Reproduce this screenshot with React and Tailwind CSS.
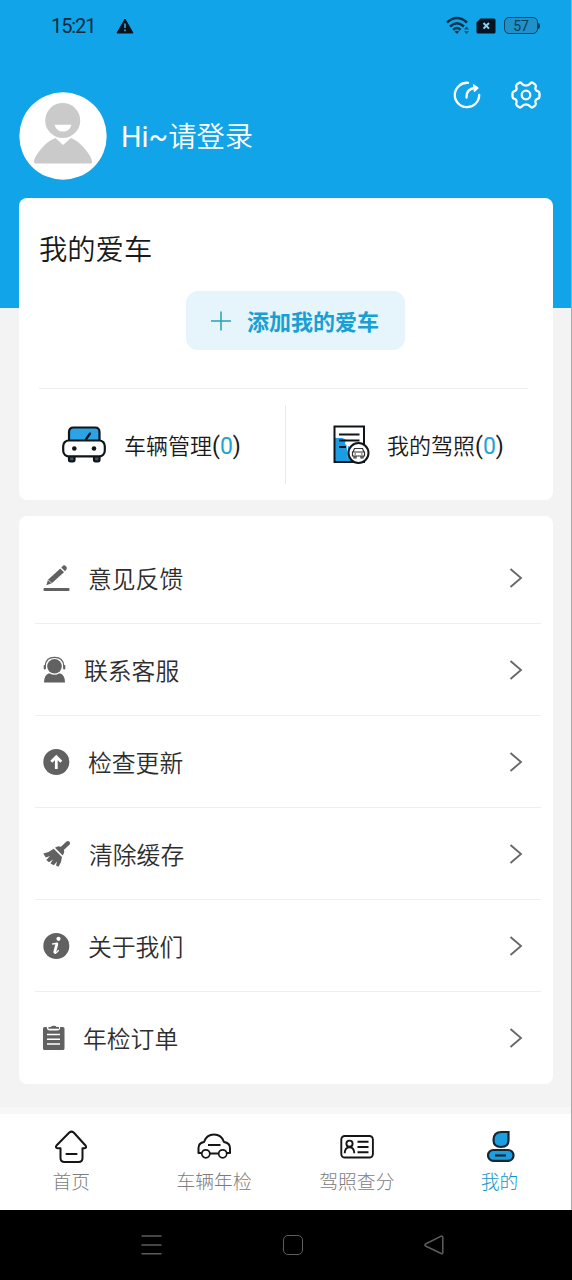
import React from 'react';

const StatusBar = () => (
  <div className="flex h-[52px] items-center pl-[51px] pr-[31px] text-[#082b42]">
    <span className="w-[65px] font-['Roboto'] text-[20px] font-normal leading-none tracking-[-1.1px]">15:21</span>
    <svg className="h-[16px] w-[18px]" viewBox="0 0 18 16">
      <path d="M9 1 L17 15 H1 Z" fill="#06141f" stroke="#06141f" strokeWidth="1" strokeLinejoin="round" />
      <path d="M9 5.5 V10 M9 11.5 V13.2" stroke="#4aa8d8" strokeWidth="1.6" />
    </svg>
    <svg className="ml-auto h-[20px] w-[24px]" viewBox="0 0 24 20" fill="none" stroke="#073049" strokeWidth="2.4">
      <path d="M1 6.500 Q11 -2.500 21 6.500" />
      <path d="M4 10.5 Q11 4 18 10.5" />
      <path d="M7.2 13.8 Q11 10.4 14.5 13.8" />
      <path d="M8.6 15.6 L11 18 L13.2 15.6 Q11 14 8.6 15.6Z" fill="#073049" stroke="none" />
      <path d="M18 13.5 L20.5 10.5 L23 13.5Z M18 15 L20.5 18 L23 15Z" fill="#0a5078" stroke="none" />
    </svg>
    <svg className="ml-[6px] -mt-px h-[16px] w-[20px]" viewBox="0 0 20 16">
      <path d="M4.5 0.5 H18 Q19.5 0.5 19.5 2 V14 Q19.5 15.5 18 15.5 H2 Q0.5 15.5 0.5 14 V4.5 Z" fill="#06141f" />
      <path d="M7.5 5 L13 10.6 M13 5 L7.5 10.6" stroke="#8fd0f0" strokeWidth="2" />
    </svg>
    <div className="ml-[8px] -mt-px flex h-[17px] w-[34px] items-center justify-center rounded-[5px] border-[1.5px] border-[#0a4569] bg-[#2092cb] font-['Roboto'] text-[14px] font-normal leading-none text-[#0a3d5c]">
      57
    </div>
    <div className="-mt-px h-[6px] w-[2px] rounded-r-sm bg-[#0a4569]" />
  </div>
);

const Avatar = () => (
  <svg className="h-[88px] w-[88px]" viewBox="0 0 88 88">
    <circle cx="44" cy="44" r="43.7" fill="#fff" />
    <path d="M15 70.5 Q14.5 66 22 57 Q29 48.500 36.500 46 L44 53 L52 46 Q59 48.500 66 57 Q73.500 66 73 70.500 Q72.500 71.500 71 71.500 H17 Q15.500 71.500 15 70.500Z" fill="#cacaca" />
    <circle cx="44" cy="28.500" r="19" fill="#fff" />
    <circle cx="43.700" cy="28.500" r="17.500" fill="#cacaca" />
    <path d="M35.500 32.700 H52.500 Q50.500 39.500 44 39.500 Q37.500 39.500 35.500 32.700Z" fill="#fff" />
  </svg>
);

const ShareIcon = () => (
  <svg className="h-[28px] w-[28px]" viewBox="0 0 28 28" fill="none" stroke="#fff" strokeWidth="2.300" strokeLinecap="round" strokeLinejoin="round">
    <path d="M15 1.800 A12.200 12.200 0 1 0 26.200 14" />
    <path d="M13.500 16.500 Q13 8 22 7" />
    <path d="M20.500 3.800 L25 7 L21.500 10.200Z" fill="#fff" strokeWidth="1.300" />
  </svg>
);

const GearIcon = () => (
  <svg className="h-[30px] w-[30px]" viewBox="0 0 30 30" fill="none" stroke="#fff" strokeWidth="2.300" strokeLinejoin="round">
    <path d="M8 2.900 Q9.300 2 10.500 3.200 Q12.300 5.600 15 5.600 Q17.700 5.600 19.500 3.200 Q20.700 2 22 2.900 L24.300 4.700 Q25.300 5.700 24.600 7.200 Q23.700 10.400 26.600 11.200 Q28.500 11.700 28.500 13.300 V16.700 Q28.500 18.300 26.600 18.800 Q23.700 19.600 24.600 22.800 Q25.300 24.300 24.300 25.300 L22 27.100 Q20.700 28 19.500 26.800 Q17.700 24.400 15 24.400 Q12.300 24.400 10.500 26.800 Q9.300 28 8 27.100 L5.700 25.300 Q4.700 24.300 5.400 22.800 Q6.300 19.600 3.400 18.800 Q1.500 18.300 1.500 16.700 V13.300 Q1.500 11.700 3.400 11.200 Q6.300 10.400 5.400 7.200 Q4.700 5.700 5.700 4.700Z" />
    <circle cx="15" cy="15" r="4.300" />
  </svg>
);

const CarIcon = () => (
  <svg className="h-[37px] w-[44px]" viewBox="0 0 44 37" stroke="#10151a" strokeWidth="2.200">
    <rect x="7" y="29.500" width="5.500" height="5.800" rx="1.500" fill="#456" />
    <rect x="32" y="29.500" width="5.500" height="5.800" rx="1.500" fill="#456" />
    <path d="M7 16 V6 Q7 1.500 11.500 1.500 H33 Q37.500 1.500 37.500 6 V16Z" fill="#2ba3e4" />
    <path d="M23.500 14 L28 7.500" strokeLinecap="round" />
    <rect x="1.200" y="14.500" width="41.600" height="15.800" rx="5.500" fill="#fff" />
    <circle cx="12.300" cy="22.500" r="2.300" fill="#10151a" stroke="none" />
    <circle cx="32" cy="22.500" r="2.300" fill="#10151a" stroke="none" />
  </svg>
);

const LicenseIcon = () => (
  <svg className="h-[39px] w-[37px]" viewBox="0 0 37 39" fill="none" stroke="#10151a" strokeWidth="2">
    <path d="M2 13 H9 L13 14.500 L15 37 H2Z" fill="#1c9ce2" stroke="none" />
    <path d="M14 37 H30.500 V20 L15 20Z" fill="#1c9ce2" stroke="none" />
    <path d="M13 12 H30 V22 H17 L12 19Z" fill="#fff" stroke="none" />
    <rect x="1.500" y="1.500" width="29.500" height="35.500" />
    <path d="M6 9.500 H26.500 M6 15.500 H26.500 M6 22 H13" />
    <circle cx="25.500" cy="28" r="10" fill="#fff" />
    <path d="M20 27 L21.500 23.500 H29.500 L31 27 M19.500 27 H31.500 V31 H19.500Z M21 31 V33 H23 V31 M28 31 V33 H30 V31 M21.500 29 H23 M28 29 H29.500" stroke="#333" strokeWidth="1.200" />
  </svg>
);

const PencilIcon = () => (
  <svg className="h-[28px] w-[27px]" viewBox="0 0 27 28" fill="#616161">
    <rect x="0.500" y="24" width="26" height="3" rx="1" />
    <path d="M3.300 21.300 L5 15.800 L17.300 4.500 L21 8.200 L8.800 19.300Z" />
    <path d="M18.300 3.500 L20.200 1.500 Q21.500 0.600 23 2.200 Q24.500 3.800 23.600 5.200 L22 7.200Z" />
    <path d="M4.500 15.500 L9 19.500" stroke="#fff" strokeWidth="0.700" />
  </svg>
);

const ServiceIcon = () => (
  <svg className="h-[28px] w-[23px]" viewBox="0 0 23 28" fill="#616161">
    <path d="M2.200 10 Q2.700 1.300 11.500 1.300 Q20.300 1.300 20.800 10" fill="none" stroke="#616161" strokeWidth="1.200" />
    <rect x="0.700" y="9" width="2.200" height="4.500" rx="1" />
    <rect x="20.100" y="9" width="2.200" height="4.500" rx="1" />
    <circle cx="11.500" cy="10.300" r="7.300" />
    <path d="M1 26.500 Q1 18.500 6.500 17.200 Q11.500 20.500 16.500 17.200 Q22 18.500 22 26.500Z" />
  </svg>
);

const UpdateIcon = () => (
  <svg className="h-[28px] w-[27px]" viewBox="0 0 27 28">
    <circle cx="13.300" cy="14" r="13" fill="#616161" />
    <path d="M13.300 21 V9 M8.300 13.800 L13.300 8.800 L18.300 13.800" fill="none" stroke="#fff" strokeWidth="2.800" />
  </svg>
);

const BroomIcon = () => (
  <svg className="h-[28px] w-[27px]" viewBox="0 0 27 28" fill="#616161">
    <path d="M23.500 1.500 Q25 0.300 26.500 1.800 Q27.700 3.300 26.400 4.700 L20.800 9.900 Q21.800 11.500 20.500 14 L19.700 15.500 L12 7.800 Q15 5.300 17.900 6.700Z" />
    <path d="M10.700 8.700 L19 17 Q18.700 22.500 15.500 26.800 L13 25.500 L14 21.500 L10.800 25.300 L7.500 23.500 L10 19.500 L6 22.300 L3.300 20 L7 16 L2.800 17.500 L0.300 13.500 Q6 12.500 10.700 8.700Z" />
  </svg>
);

const InfoIcon = () => (
  <svg className="h-[28px] w-[27px]" viewBox="0 0 27 28">
    <circle cx="13.300" cy="14" r="13" fill="#616161" />
    <circle cx="15.500" cy="6.800" r="2.100" fill="#fff" />
    <path d="M9.700 12 L14.300 11.300 L11.700 20 Q11.400 21.700 12.800 21 Q14 20.300 15.300 18.600" fill="none" stroke="#fff" strokeWidth="1.400" strokeLinecap="round" strokeLinejoin="round" />
    <path d="M13.800 12.300 L11.700 20" stroke="#fff" strokeWidth="2.800" strokeLinecap="round" />
  </svg>
);

const OrderIcon = () => (
  <svg className="h-[28px] w-[22px]" viewBox="0 0 22 28">
    <path d="M0 4.500 Q0 3 1.500 3 H3.800 Q4 6.500 6.500 6.500 H14.500 Q17 6.500 17.200 3 H20 Q21.500 3 21.500 4.500 V24.500 Q21.500 26 20 26 H1.500 Q0 26 0 24.500Z" fill="#616161" />
    <path d="M5.500 4.800 V3 H8 Q8 1.800 10.800 1.800 Q13.500 1.800 13.500 3 H16 V4.800Z" fill="#616161" />
    <path d="M4 10.500 H17 M4 15.300 H17 M4 20 H17" stroke="#fff" strokeWidth="1.600" />
  </svg>
);

const ITEMS = [
  { label: '意见反馈', Icon: PencilIcon, gap: 'gap-[18px]' },
  { label: '联系客服', Icon: ServiceIcon, gap: 'gap-[18px]' },
  { label: '检查更新', Icon: UpdateIcon, gap: 'gap-[18px]' },
  { label: '清除缓存', Icon: BroomIcon, gap: 'gap-[19px]' },
  { label: '关于我们', Icon: InfoIcon, gap: 'gap-[18px]' },
  { label: '年检订单', Icon: OrderIcon, gap: 'gap-[18px]' },
];

const MenuRow = ({ label, Icon, gap, last }) => (
  <li className={`flex h-[92px] items-center pl-[8px] pr-[18px] ${last ? '' : 'border-b border-[#efefef]'}`}>
    <div className={`flex items-center ${gap}`}>
      <Icon />
      <span className="text-[23.8px] leading-none text-[#2e2e2e]">{label}</span>
    </div>
    <svg className="ml-auto h-[20px] w-[14px]" viewBox="0 0 14 20" fill="none" stroke="#666" strokeWidth="1.800">
      <path d="M1.500 1 L12 10 L1.500 19" />
    </svg>
  </li>
);

const HomeTab = () => (
  <svg className="h-[34px] w-[34px]" viewBox="-0.500 0 34 34" fill="none" stroke="#151515" strokeWidth="2" strokeLinejoin="round" strokeLinecap="round">
    <path d="M6 18.300 H3.200 Q0.500 18 2 15.500 L14.800 2.500 Q17 0.700 19.200 2.500 L31 15.500 Q32.500 18 30 18.300 H28 V28 Q28 32 24 32 H10 Q6 32 6 28Z" />
    <path d="M12 24 H22" strokeWidth="2.200" />
  </svg>
);

const CarTab = () => (
  <svg className="h-[34px] w-[34px]" viewBox="0 0 34 34" fill="none" stroke="#151515" strokeWidth="2" strokeLinejoin="round">
    <path d="M4.500 23 H1.500 V18 Q1.500 13 7 12 Q9.500 4.500 17 4.500 Q24.500 4.500 27 12 Q33 13 33 18 V23 H30 M13 23.500 H21.500" />
    <circle cx="8.800" cy="23.800" r="4" strokeWidth="1.700" />
    <circle cx="25.700" cy="23.800" r="4" strokeWidth="1.700" />
    <path d="M11 15 H23.500" />
  </svg>
);

const CardTab = () => (
  <svg className="h-[34px] w-[34px]" viewBox="0 0 34 34" fill="none" stroke="#151515" strokeWidth="1.900">
    <rect x="1.300" y="6" width="31.600" height="21.500" rx="3.500" />
    <circle cx="9.500" cy="13.700" r="3.100" />
    <path d="M4.700 23.300 Q5 17.300 9.500 17.300 Q14 17.300 14.300 23.300 M17.500 11.800 H28.500 M17.500 17 H28.500 M17.500 22.300 H28.500" />
  </svg>
);

const MineTab = () => (
  <svg className="h-[34px] w-[34px]" viewBox="0 0 34 34" fill="#1a9fe0" stroke="#152733" strokeWidth="2.200">
    <path d="M25.500 2 V10 Q25.500 17 18 17 Q10.500 17 10.500 10 Q10.500 2 18.500 2Z" />
    <rect x="5" y="20" width="25.500" height="10.800" rx="5.400" />
    <path d="M12 25.500 H23" />
  </svg>
);

const TABS = [
  { label: '首页', Icon: HomeTab },
  { label: '车辆年检', Icon: CarTab },
  { label: '驾照查分', Icon: CardTab },
  { label: '我的', Icon: MineTab, active: true },
];

const Count = ({ value }) => (
  <span className="font-['Roboto'] text-[23px] font-normal">
    (<span className="text-[#22a3cf]">{value}</span>)
  </span>
);

export default function App() {
  return (
    <div className="flex h-[1280px] w-[572px] flex-col overflow-hidden bg-[#f3f3f3] font-['Noto_Sans_CJK_SC',sans-serif] font-[350]">
      <div className="flex h-[1210px] flex-col border-r border-black/30">
        <header className="h-[308px] shrink-0 bg-[#11a4e8]">
          <StatusBar />
          <div className="flex h-[146px] items-start pl-[19px] pr-[30px]">
            <div className="mt-[40px] flex items-center gap-[14px]">
              <Avatar />
              <span className="whitespace-nowrap text-[28.300px] leading-none text-white">
                <span className="font-['Roboto'] text-[28.800px] font-normal">Hi~</span>请登录
              </span>
            </div>
            <div className="ml-auto mt-[28px] flex items-center gap-[30px]">
              <ShareIcon />
              <GearIcon />
            </div>
          </div>
        </header>

        <main className="-mt-[110px] flex flex-1 flex-col gap-[16px] pl-[19px] pr-[18px]">
          <section className="flex h-[302px] flex-col rounded-[8px] bg-white px-[20px]">
            <h1 className="mt-[36px] text-[28.300px] leading-[28px] text-[#1a1a1a]">我的爱车</h1>
            <button className="ml-[147px] mt-[29px] flex h-[59px] w-[219px] items-center rounded-[12px] bg-[#e6f4fb] pl-[25px] text-[#18a0d4]">
              <svg className="h-[20px] w-[20px]" viewBox="0 0 20 20" stroke="#2a9fb8" strokeWidth="1.500">
                <path d="M0 10 H20 M10 0.500 V19.500" />
              </svg>
              <span className="-mt-[2px] ml-[16px] text-[22px] font-bold leading-none">添加我的爱车</span>
            </button>
            <div className="mt-[38px] mr-[5px] h-px bg-[#ededed]" />
            <div className="flex h-[111px] items-center">
              <div className="flex h-[79px] w-[247px] items-center border-r border-[#e9e9e9] pl-[23px]">
                <CarIcon />
                <span className="ml-[18px] mt-[2px] whitespace-nowrap text-[22px] leading-none text-[#1a1a1a]">
                  车辆管理<Count value={0} />
                </span>
              </div>
              <div className="flex items-center pl-[47px]">
                <LicenseIcon />
                <span className="ml-[17px] mt-[2px] whitespace-nowrap text-[22px] leading-none text-[#1a1a1a]">
                  我的驾照<Count value={0} />
                </span>
              </div>
            </div>
          </section>

          <section className="h-[568px] rounded-[8px] bg-white px-[16px] pr-[12px] pt-[16px]">
            <ul>
              {ITEMS.map((item, i) => (
                <MenuRow key={item.label} {...item} last={i === ITEMS.length - 1} />
              ))}
            </ul>
          </section>
        </main>

        <div className="h-[7px] shrink-0 bg-[#f7f7f7]" />
        <nav className="grid h-[96px] shrink-0 grid-cols-4 bg-white">
          {TABS.map(({ label, Icon, active }) => (
            <div key={label} className="flex flex-col items-center pt-[16px]">
              <Icon />
              <span className={`mt-[7px] text-[18.800px] font-light leading-[19px] ${active ? 'text-[#1398c6]' : 'text-[#7c7c7c]'}`}>{label}</span>
            </div>
          ))}
        </nav>
      </div>

      <footer className="flex h-[70px] items-center bg-black pl-[141px]">
        <svg className="h-[22px] w-[21px]" viewBox="0 0 21 22" stroke="#5d5d5d" strokeWidth="1.500">
          <path d="M0.500 2 H20.500 M0.500 11 H20.500 M0.500 19.700 H20.500" />
        </svg>
        <div className="ml-[121px] h-[20px] w-[20px] rounded-[5px] border-[1.500px] border-[#5d5d5d]" />
        <svg className="ml-[121px] h-[20px] w-[20px]" viewBox="0 0 20 20" fill="none" stroke="#5d5d5d" strokeWidth="1.500" strokeLinejoin="round">
          <path d="M17.200 1.200 Q18.800 0.700 18.800 2.500 V17.500 Q18.800 19.300 17.200 18.500 L1.500 11 Q0.300 10 1.500 9Z" />
        </svg>
      </footer>
    </div>
  );
}
